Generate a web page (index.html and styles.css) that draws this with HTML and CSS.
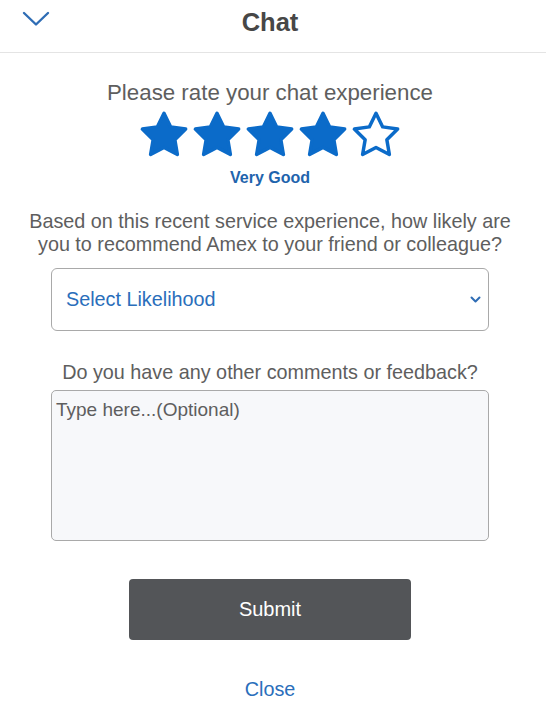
FILE: index.html
```html
<!DOCTYPE html>
<html lang="en">
<head>
  <meta charset="UTF-8" />
  <meta name="viewport" content="width=device-width, initial-scale=1.0"/>
  <title>Chat</title>
  <link rel="stylesheet" href="styles.css">
</head>
<body>
  <header class="topbar">
    <button class="collapse" aria-label="Minimize">
      <svg width="28" height="16" viewBox="0 0 28 16"><polyline points="2,2 14,13.5 26,2" fill="none" stroke="#2f6db5" stroke-width="2.4" stroke-linecap="round" stroke-linejoin="round"/></svg>
    </button>
    <h1>Chat</h1>
  </header>

  <main class="survey">
    <p class="rate-title">Please rate your chat experience</p>
    <div class="stars">
      <svg class="star" viewBox="0 0 24 24"><polygon class="on" points="12,2 15.09,8.26 22,9.27 17,14.14 18.18,21.02 12,17.77 5.82,21.02 7,14.14 2,9.27 8.91,8.26"/></svg>
      <svg class="star" viewBox="0 0 24 24"><polygon class="on" points="12,2 15.09,8.26 22,9.27 17,14.14 18.18,21.02 12,17.77 5.82,21.02 7,14.14 2,9.27 8.91,8.26"/></svg>
      <svg class="star" viewBox="0 0 24 24"><polygon class="on" points="12,2 15.09,8.26 22,9.27 17,14.14 18.18,21.02 12,17.77 5.82,21.02 7,14.14 2,9.27 8.91,8.26"/></svg>
      <svg class="star" viewBox="0 0 24 24"><polygon class="on" points="12,2 15.09,8.26 22,9.27 17,14.14 18.18,21.02 12,17.77 5.82,21.02 7,14.14 2,9.27 8.91,8.26"/></svg>
      <svg class="star" viewBox="0 0 24 24"><polygon class="off" points="12,2 15.09,8.26 22,9.27 17,14.14 18.18,21.02 12,17.77 5.82,21.02 7,14.14 2,9.27 8.91,8.26"/></svg>
    </div>
    <p class="rating-label">Very Good</p>

    <p class="question">Based on this recent service experience, how likely are you to recommend Amex to your friend or colleague?</p>
    <div class="select">
      <span>Select Likelihood</span>
      <svg width="11" height="8" viewBox="0 0 11 8"><polyline points="1.5,1.5 5.5,5.5 9.5,1.5" fill="none" stroke="#2f6db5" stroke-width="2" stroke-linecap="round" stroke-linejoin="round"/></svg>
    </div>

    <p class="question comments">Do you have any other comments or feedback?</p>
    <textarea class="feedback" placeholder="Type here...(Optional)"></textarea>

    <button class="submit">Submit</button>
    <a class="close" href="#">Close</a>
  </main>
</body>
</html>
```

FILE: styles.css
```css
body {
  margin: 0;
  font-family: 'Liberation Sans', Arial, sans-serif;
  background-color: #ffffff;
  color: #5e5e5e;
}
.topbar {
  position: relative;
  height: 52px;
  border-bottom: 1px solid #e4e4e4;
  display: flex;
  align-items: center;
  justify-content: center;
  padding-right: 6px;
}
.topbar h1 {
  margin: 0;
  font-size: 25.5px;
  font-weight: bold;
  color: #474747;
  padding-bottom: 8px;
}
.collapse {
  position: absolute;
  left: 22px;
  top: 11px;
  padding: 0;
  border: none;
  background: none;
  line-height: 0;
}
.survey {
  display: flex;
  flex-direction: column;
  align-items: center;
  padding: 0 57px 0 51px;
}
.survey p {
  margin: 0;
  text-align: center;
}
.rate-title {
  margin-top: 28px !important;
  font-size: 22.3px;
  line-height: 24px;
}
.stars {
  display: flex;
  gap: 1px;
  margin-top: 4px;
}
.star {
  width: 52px;
  height: 52px;
}
.star polygon {
  stroke: #0b6bc9;
  stroke-width: 1.6;
  stroke-linejoin: round;
}
.star .on {
  fill: #0b6bc9;
}
.star .off {
  fill: #ffffff;
}
.rating-label {
  margin-top: 8px !important;
  font-size: 16px;
  line-height: 18px;
  font-weight: bold;
  color: #1f64ad;
}
.question {
  margin-top: 23px !important;
  font-size: 19.8px;
  line-height: 23px;
  width: 500px;
}
.select {
  box-sizing: border-box;
  width: 100%;
  height: 63px;
  margin-top: 12px;
  padding: 0 7px 0 14px;
  border: 1px solid #a9a9a9;
  border-radius: 6px;
  display: flex;
  align-items: center;
  justify-content: space-between;
  font-size: 19.8px;
  color: #2a6ebb;
}
.comments {
  margin-top: 30px !important;
}
.feedback {
  box-sizing: border-box;
  display: block;
  width: 100%;
  height: 151px;
  margin-top: 6px;
  padding: 8px 4px;
  border: 1px solid #a9a9a9;
  border-radius: 5px;
  background: #f7f8fa;
  font-family: inherit;
  font-size: 19px;
  color: #5e5e5e;
  resize: none;
}
.feedback::placeholder {
  color: #5e5e5e;
}
.submit {
  width: 282px;
  height: 61px;
  margin-top: 38px;
  border: none;
  border-radius: 4px;
  background: #535558;
  color: #ffffff;
  font-family: inherit;
  font-size: 20px;
}
.close {
  margin-top: 38px;
  font-size: 19.8px;
  line-height: 23px;
  color: #2a6ebb;
  text-decoration: none;
}
```
